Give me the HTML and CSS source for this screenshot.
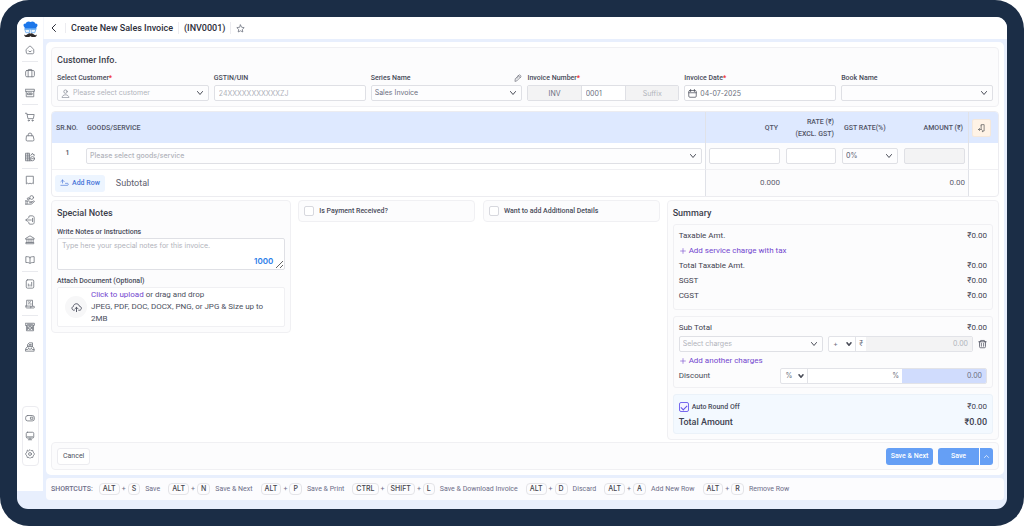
FILE: index.html
```html
<!DOCTYPE html>
<html lang="en">
<head>
<meta charset="utf-8">
<meta name="viewport" content="width=device-width, initial-scale=1">
<title>Create New Sales Invoice</title>
<link rel="stylesheet" href="styles.css">
</head>
<body>
<svg class="sprite" aria-hidden="true">
  <symbol id="chev" viewBox="0 0 10 10"><path d="M2.500 3.500l2.500 3 2.500-3"/></symbol>
  <symbol id="home" viewBox="0 0 24 24"><path d="M3 10.500L10 3.600a3 3 0 0 1 4 0l7 6.900V18a3 3 0 0 1-3 3H6a3 3 0 0 1-3-3zM8 14c1.500 3 6.500 3 8 0"/></symbol>
  <symbol id="case" viewBox="0 0 24 24"><rect x="1.500" y="6" width="21" height="15" rx="3"/><path d="M8 6V3.500h8V6M7.500 6v15M16.500 6v15"/></symbol>
  <symbol id="archive" viewBox="0 0 24 24"><path d="M1.500 3h21v5h-21zM3 8v13h18V8M7 12h10v4H7zM10 14h4"/></symbol>
  <symbol id="cart" viewBox="0 0 24 24"><path d="M1 3h3.500L7 16h13l2-10H5.500"/><circle cx="9" cy="20.500" r="1.400"/><circle cx="18" cy="20.500" r="1.400"/></symbol>
  <symbol id="bag" viewBox="0 0 24 24"><path d="M4.500 9h15l2 9a3 3 0 0 1-3 3.500h-13a3 3 0 0 1-3-3.500zM7.500 9V7a4.500 4.500 0 0 1 9 0v2"/></symbol>
  <symbol id="stock" viewBox="0 0 24 24"><path d="M2 3h9v18H2zM2 7.500h9M2 12h9M2 16.500h9M6.500 3v18M11 21h4M14 8l4-5 1 3h3v3"/><circle cx="18" cy="16" r="5"/><path d="M16 16h4"/></symbol>
  <symbol id="note" viewBox="0 0 24 24"><path d="M4 3h16v18l-2.500-1.500L15 21l-3-1.500L9 21l-2.500-1.500L4 21z"/></symbol>
  <symbol id="hand" viewBox="0 0 24 24"><circle cx="16" cy="6" r="4.500"/><circle cx="8" cy="9" r="2.500"/><path d="M1 14h4v8H1zM5 15c4-2 5 0 8 1h3c1 0 1 2.500-1 2.500h-4M16 17l5-3c2 0 2 2 0 3.500L15 22H5"/></symbol>
  <symbol id="exit" viewBox="0 0 24 24"><path d="M9 7V5c0-2 1-3 3-3h5c3 0 5 2 5 4v12c0 3-2 4-5 4h-5c-2 0-3-1-3-3v-2M15 12H2M5.500 8.500L2 12l3.500 3.500M18 8v8"/></symbol>
  <symbol id="bank" viewBox="0 0 24 24"><path d="M2 8l10-6 10 6v2H2zM4.500 10v8M9.500 10v8M14.500 10v8M19.500 10v8M3 18h18v3H3z"/></symbol>
  <symbol id="book" viewBox="0 0 24 24"><path d="M12 6c-2-2-5-2-10-2v14c5 0 8 0 10 2.500C14 18 17 18 22 18V4c-5 0-8 0-10 2zM12 6v14"/></symbol>
  <symbol id="chart" viewBox="0 0 24 24"><rect x="3" y="2" width="18" height="20" rx="3"/><path d="M8 17v-5M12 17v-3M16 17V8"/></symbol>
  <symbol id="bill" viewBox="0 0 24 24"><path d="M4 17V3h14v13M2 17h12v4.500H4c-2 0-2-2-2-4.500zM14 21.500h7c2 0 2-2 1-4h-8M8 12l6-6M8 7h2M12 12h3"/></symbol>
  <symbol id="safe" viewBox="0 0 24 24"><path d="M1.500 3h21v5h-21zM3.500 8v13h17V8M6 5.500h12"/><circle cx="12" cy="14" r="4"/><path d="M12 12v4M6 11v7M18 11v7"/></symbol>
  <symbol id="print" viewBox="0 0 24 24"><path d="M6 11V6l4-4h8v9M3 14l3-3h12l3 3 1 8H2zM10 6h5M9 9h6M8 14l1 3h6l1-3M2 18h4M18 18h4"/></symbol>
  <symbol id="toggle" viewBox="0 0 24 24"><rect x="1.500" y="6" width="21" height="13" rx="5"/><path d="M14 10h5v5h-5z"/></symbol>
  <symbol id="screen" viewBox="0 0 24 24"><rect x="3" y="3" width="18" height="14" rx="3"/><path d="M5 14h14M12 17v3M8 21h8"/></symbol>
  <symbol id="gear" viewBox="0 0 24 24"><path d="M9.500 4L12 1.500 14.500 4l4-.5 1 4L22 10v4l-2.500 2.500-1 4-4-.5L12 22.500 9.500 20l-4 .5-1-4L2 14v-4l2.500-2.500 1-4z"/><circle cx="12" cy="12" r="3.500"/></symbol>
</svg>

<div class="frame">
 <div class="screen">
  <nav class="side" aria-label="Main">
    <svg class="logo" viewBox="0 0 28 32" aria-label="Logo">
      <path fill="#1b76ea" d="M3 12C-1 9 1 4 5 5 6 1 11 0 14 2c3-2 8-1 9 3 4-1 6 4 2 7v3H3z"/>
      <path fill="#8ec3f8" d="M3 14h22v3H3z"/>
      <path fill="#e9f4ff" stroke="#64a9ef" stroke-width="1.500" d="M4 16h8v6H6zM16 16h8l-2 6h-6z"/>
      <path fill="#2e2a2a" d="M14 24c2-2 5 0 7 2 2 1 4 1 5-1 0 5-4 6-8 5-2 0-3-1-4-2-1 1-2 2-4 2-4 1-8 0-8-5 1 2 3 2 5 1 2-2 5-4 7-2z"/>
    </svg>
    <a class="nav" href="#" aria-label="Home"><svg><use href="#home"/></svg></a>
    <hr>
    <a class="nav" href="#" aria-label="Business"><svg><use href="#case"/></svg></a>
    <a class="nav" href="#" aria-label="Products"><svg><use href="#archive"/></svg></a>
    <hr>
    <a class="nav" href="#" aria-label="Sales"><svg><use href="#cart"/></svg></a>
    <a class="nav" href="#" aria-label="Purchase"><svg><use href="#bag"/></svg></a>
    <a class="nav" href="#" aria-label="Stock"><svg><use href="#stock"/></svg></a>
    <hr>
    <a class="nav" href="#" aria-label="Notes"><svg><use href="#note"/></svg></a>
    <a class="nav" href="#" aria-label="Payments"><svg><use href="#hand"/></svg></a>
    <a class="nav" href="#" aria-label="Expenses"><svg><use href="#exit"/></svg></a>
    <a class="nav" href="#" aria-label="Bank"><svg><use href="#bank"/></svg></a>
    <a class="nav" href="#" aria-label="Ledger"><svg><use href="#book"/></svg></a>
    <hr>
    <a class="nav" href="#" aria-label="Reports"><svg><use href="#chart"/></svg></a>
    <a class="nav" href="#" aria-label="Bills"><svg><use href="#bill"/></svg></a>
    <hr>
    <a class="nav" href="#" aria-label="Cash"><svg><use href="#safe"/></svg></a>
    <a class="nav" href="#" aria-label="Print"><svg><use href="#print"/></svg></a>
    <div class="side-tools">
      <a href="#" aria-label="Wallet"><svg><use href="#toggle"/></svg></a>
      <a href="#" aria-label="Display"><svg><use href="#screen"/></svg></a>
      <a href="#" aria-label="Settings"><svg><use href="#gear"/></svg></a>
    </div>
  </nav>

  <div class="main">
    <header class="top">
      <button class="bare" aria-label="Back"><svg class="i-back" viewBox="0 0 10 10"><path d="M6.500 1.500L3 5l3.500 3.500"/></svg></button>
      <h1>Create New Sales Invoice</h1>
      <span class="number">(INV0001)</span>
      <button class="bare" aria-label="Favourite"><svg class="i-star" viewBox="0 0 24 24"><path d="M12 2.500l3 6.200 6.800 1-4.900 4.800 1.200 6.800-6.100-3.200-6.100 3.200 1.200-6.800-4.900-4.800 6.800-1z"/></svg></button>
    </header>

    <form class="sheet">
      <section class="card customer">
        <h2>Customer Info.</h2>
        <div class="fields">
          <div class="field">
            <label for="cust">Select Customer<b>*</b></label>
            <div class="select icon-left"><svg class="lead" viewBox="0 0 24 24"><circle cx="12" cy="7" r="4.500"/><path d="M3 22c0-9 18-9 18 0z"/></svg><select id="cust" class="empty"><option>Please select customer</option></select><svg class="chev"><use href="#chev"/></svg></div>
          </div>
          <div class="field">
            <label for="gst">GSTIN/UIN</label>
            <input id="gst" class="box" placeholder="24XXXXXXXXXXXZJ">
          </div>
          <div class="field">
            <div class="label-row"><label for="series">Series Name</label><button type="button" class="bare" aria-label="Edit series"><svg class="i-pen" viewBox="0 0 24 24"><path d="M3 21l1-7L15 3c2-2 8 3 5 6L9 20zM13 5l6 6M8 14l5-5"/></svg></button></div>
            <div class="select"><select id="series"><option>Sales Invoice</option></select><svg class="chev"><use href="#chev"/></svg></div>
          </div>
          <div class="field">
            <label for="invno">Invoice Number<b>*</b></label>
            <div class="joined"><input class="muted" value="INV" aria-label="Prefix"><input id="invno" value="0001"><input class="muted" placeholder="Suffix" aria-label="Suffix"></div>
          </div>
          <div class="field">
            <label for="date">Invoice Date<b>*</b></label>
            <div class="select icon-left"><svg class="lead dark" viewBox="0 0 24 24"><rect x="2" y="4" width="20" height="18" rx="3"/><path d="M2 10h20M7 1v6M17 1v6"/></svg><input id="date" class="box" value="04-07-2025"></div>
          </div>
          <div class="field">
            <label for="bookname">Book Name</label>
            <div class="select"><select id="bookname"><option></option></select><svg class="chev"><use href="#chev"/></svg></div>
          </div>
        </div>
      </section>

      <div class="table-card">
        <table>
          <colgroup><col class="c-sr"><col><col class="c-qty"><col class="c-rate"><col class="c-gst"><col class="c-amt"><col class="c-act"></colgroup>
          <thead>
            <tr>
              <th class="sr">SR.NO.</th><th class="goods">GOODS/SERVICE</th><th class="num edge">QTY</th><th class="num">RATE (₹)<br>(EXCL. GST)</th><th class="gst">GST RATE(%)</th><th class="num">AMOUNT (₹)</th>
              <th class="edge act"><button type="button" class="cols" aria-label="Columns"><svg viewBox="0 0 24 24"><path d="M11 6V3h8v17h-5M11 6v8M4 16h8M7 13l-3 3 3 3M15 20v2"/></svg></button></th>
            </tr>
          </thead>
          <tbody>
            <tr class="item">
              <td class="idx">1</td>
              <td><div class="select"><select class="empty" aria-label="Goods or service"><option>Please select goods/service</option></select><svg class="chev"><use href="#chev"/></svg></div></td>
              <td class="edge tint"><input class="box" aria-label="Quantity"></td>
              <td class="tint"><input class="box" aria-label="Rate"></td>
              <td class="tint"><div class="select"><select aria-label="GST rate"><option>0%</option></select><svg class="chev"><use href="#chev"/></svg></div></td>
              <td class="tint"><input class="box muted" aria-label="Amount" readonly></td>
              <td class="edge"></td>
            </tr>
          </tbody>
          <tfoot>
            <tr>
              <td colspan="2"><div class="foot-left"><button type="button" class="add-row"><svg viewBox="0 0 26 24"><path d="M7 3v9M2 8l5-5 5 5M2 19h20c3 0 3-6 0-6h-6"/></svg>Add Row</button><span>Subtotal</span></div></td>
              <td class="edge tint num">0.000</td><td class="tint"></td><td class="tint"></td><td class="tint num total">0.00</td><td class="edge"></td>
            </tr>
          </tfoot>
        </table>
      </div>

      <div class="lower">
        <section class="card notes">
          <h2>Special Notes</h2>
          <label for="notes">Write Notes or Instructions</label>
          <div class="area"><textarea id="notes" placeholder="Type here your special notes for this invoice."></textarea><span>1000</span></div>
          <h3>Attach Document (Optional)</h3>
          <div class="upload">
            <span class="up-icon"><svg viewBox="0 0 24 24"><path d="M7 18H6C1 17 1 11 5 10c1-8 12-8 13-1 6 1 6 8 1 9h-2M12 21v-9M8.500 15l3.500-3.500 3.500 3.500"/></svg></span>
            <p><a href="#">Click to upload</a> or drag and drop<br>JPEG, PDF, DOC, DOCX, PNG, or JPG &amp; Size up to 2MB</p>
          </div>
        </section>
        <div class="options">
          <label class="card opt"><input type="checkbox" class="tick">Is Payment Received?</label>
          <label class="card opt"><input type="checkbox" class="tick">Want to add Additional Details</label>
        </div>
        <section class="card summary">
          <h2>Summary</h2>
          <div class="panel">
            <div class="row"><span>Taxable Amt.</span><span>₹0.00</span></div>
            <button type="button" class="add"><svg viewBox="0 0 10 10"><path d="M5 1v8M1 5h8"/></svg>Add service charge with tax</button>
            <div class="row"><span>Total Taxable Amt.</span><span>₹0.00</span></div>
            <div class="row"><span>SGST</span><span>₹0.00</span></div>
            <div class="row"><span>CGST</span><span>₹0.00</span></div>
          </div>
          <div class="panel">
            <div class="row"><span>Sub Total</span><span>₹0.00</span></div>
            <div class="charge">
              <div class="select"><select class="empty" aria-label="Charges"><option>Select charges</option></select><svg class="chev"><use href="#chev"/></svg></div>
              <div class="group">
                <div class="select mini"><select aria-label="Sign"><option>+</option></select><svg class="chev"><use href="#chev"/></svg></div>
                <span class="rupee">₹</span><input class="muted" placeholder="0.00" aria-label="Charge amount">
              </div>
              <button type="button" class="bare" aria-label="Delete charge"><svg class="i-bin" viewBox="0 0 24 24"><path d="M2 6h20M7 6V2.500h10V6M4 6v13c0 2 1 3 3 3h10c2 0 3-1 3-3V6M9 10v8M15 10v8"/></svg></button>
            </div>
            <button type="button" class="add"><svg viewBox="0 0 10 10"><path d="M5 1v8M1 5h8"/></svg>Add another charges</button>
            <div class="row discount">
              <label for="disc">Discount</label>
              <div class="group">
                <div class="select mini"><select aria-label="Discount type"><option>%</option></select><svg class="chev"><use href="#chev"/></svg></div>
                <input id="disc"><span class="pct">%</span><output>0.00</output>
              </div>
            </div>
          </div>
          <div class="panel blue">
            <div class="row"><label class="auto"><input type="checkbox" class="tick" checked>Auto Round Off</label><span>₹0.00</span></div>
            <div class="row grand"><span>Total Amount</span><span>₹0.00</span></div>
          </div>
        </section>
      </div>

      <footer class="card actions">
        <button type="button" class="cancel">Cancel</button>
        <button type="button" class="primary next">Save &amp; Next</button>
        <div class="split"><button type="button" class="primary save">Save</button><button type="button" class="primary more" aria-label="More save options"><svg viewBox="0 0 10 10"><path d="M2 6.500l3-3 3 3"/></svg></button></div>
      </footer>
    </form>

    <div class="shortcuts">
      <span class="cap">SHORTCUTS:</span>
      <span class="sc"><kbd>ALT</kbd>+<kbd>S</kbd><em>Save</em></span>
      <span class="sc"><kbd>ALT</kbd>+<kbd>N</kbd><em>Save &amp; Next</em></span>
      <span class="sc"><kbd>ALT</kbd>+<kbd>P</kbd><em>Save &amp; Print</em></span>
      <span class="sc"><kbd>CTRL</kbd>+<kbd>SHIFT</kbd>+<kbd>L</kbd><em>Save &amp; Download Invoice</em></span>
      <span class="sc"><kbd>ALT</kbd>+<kbd>D</kbd><em>Discard</em></span>
      <span class="sc"><kbd>ALT</kbd>+<kbd>A</kbd><em>Add New Row</em></span>
      <span class="sc"><kbd>ALT</kbd>+<kbd>R</kbd><em>Remove Row</em></span>
    </div>
  </div>
 </div>
</div>
</body>
</html>
```
FILE: styles.css
```css
* { box-sizing: border-box; }
body { margin: 0; background: #fff; font: 7px/10px Roboto, "Noto Sans", sans-serif; color: #4c4f5e; }
h1, h2, h3, p { margin: 0; font-weight: 500; }
input, select, textarea, button { font: inherit; color: inherit; margin: 0; min-width: 0; border-radius: 0; }
input, select, textarea { font-family: Inter, "Noto Sans", sans-serif; }
svg { fill: none; stroke: currentColor; stroke-linecap: round; stroke-linejoin: round; display: block; }
button { padding: 0; cursor: pointer; }
a { text-decoration: none; }
.sprite { position: absolute; width: 0; height: 0; }
.bare { border: 0; background: none; }

.frame { min-height: 100vh; padding: 17px; background: #1b2d46; border-radius: 29px; display: flex; }
.screen { flex: 1; min-width: 0; display: flex; background: #e8effd; border-radius: 11px; overflow: hidden; }

.side { width: 26px; margin-bottom: 18px; padding: 4px 0 25px; background: #fff; display: flex; flex-direction: column; align-items: center; }
.logo { width: 15px; height: 17px; stroke: none; margin-bottom: 2px; flex: none; }
.side hr { width: 16px; height: 1px; margin: 1px 0; border: 0; background: #e9eaee; flex: none; }
.side hr:nth-of-type(even) { margin-bottom: 2px; }
.nav { height: 20px; display: flex; align-items: center; color: #747881; }
.nav svg, .side-tools svg { width: 10px; height: 10px; stroke-width: 2; }
.side-tools { margin-top: auto; width: 17px; padding: 2px 0; border: 1px solid #ececf0; border-radius: 4px; display: grid; justify-items: center; }
.side-tools a { height: 18px; display: flex; align-items: center; color: #747881; }

.main { flex: 1; min-width: 0; display: flex; flex-direction: column; gap: 3px; padding-bottom: 9px; }
.top { height: 22px; background: #fff; border-left: 1px solid #f4f6fb; display: flex; align-items: center; padding-left: 5px; color: #2c2e3a; }
.top > * { padding: 0 5px; border-right: 1px solid #ececf0; line-height: 12px; }
.top > :last-child { border: 0; }
.top > .bare:first-child { padding: 0 6px 0 0; }
.top h1, .number { font-size: 9px; font-weight: 500; }
.i-back { width: 10px; height: 10px; stroke-width: 1; }
.i-star { width: 9px; height: 9px; stroke-width: 2; color: #666b78; }

.sheet { flex: 1; margin: 0 3px; padding: 5px; background: #fff; border-radius: 5px; display: flex; flex-direction: column; }
.card { background: #fcfcfd; border: 1px solid #f0f0f3; border-radius: 4px; }
h2 { font-size: 9px; line-height: 14px; font-weight: 500; color: #3c3f4c; }
label, h3 { font-size: 7px; line-height: 10px; font-weight: 500; color: #484b59; }
label b { color: #f03030; }

.customer { padding: 5px; }
.fields { display: grid; grid-template-columns: repeat(6, minmax(0, 1fr)); gap: 5px; margin-top: 6px; }
.field { display: grid; gap: 2px; }
.label-row { display: flex; justify-content: space-between; align-items: center; }
.i-pen { width: 8px; height: 8px; stroke-width: 2; color: #60646f; }

.box, .select select { width: 100%; height: 16px; padding: 0 4px; border: 1px solid #dfe0e5; border-radius: 2px; background: #fff; color: #6c6f7e; outline: 0; display: block; }
.box::placeholder, .muted::placeholder, textarea::placeholder { color: #b1b3bb; opacity: 1; }
.select { position: relative; min-width: 0; }
.select select { appearance: none; padding: 0 3px; background: #fdfdfe; }
.select .empty { color: #b1b3bb; }
.chev { position: absolute; right: 4px; top: 3px; width: 10px; height: 10px; stroke-width: 1; color: #4a4d58; pointer-events: none; }
.lead { position: absolute; left: 4px; top: 4px; width: 9px; height: 9px; stroke-width: 2; color: #878b95; pointer-events: none; }
.lead.dark { color: #4b4f5b; }
.icon-left select, .icon-left .box { padding-left: 15px; }
.muted, .box.muted { background: #f3f3f4; }
.joined { display: grid; grid-template-columns: 54fr 45fr 53fr; border: 1px solid #dfe0e5; border-radius: 2px; overflow: hidden; }
.joined input { height: 14px; padding: 0 4px; border: 0; border-right: 1px solid #dfe0e5; color: #6c6f7e; }
.joined .muted { text-align: center; }
.joined input:last-child { border-right: 0; }

.table-card { margin-top: 4px; border: 1px solid #ececf0; border-radius: 4px; overflow: hidden; }
table { width: 100%; table-layout: fixed; border-collapse: separate; border-spacing: 0; }
.c-sr { width: 31px; } .c-qty { width: 78px; } .c-rate { width: 56px; } .c-gst { width: 62px; } .c-amt { width: 67px; } .c-act { width: 30px; }
th, td { padding: 0 3px; text-align: left; font-weight: 500; }
th { height: 31px; background: #dee9ff; color: #505365; line-height: 12px; }
th.sr, th.goods { white-space: nowrap; padding-left: 4px; }
th.gst { padding-left: 5px; }
.num { text-align: right; }
th.num { padding-right: 5px; }
.edge { border-left: 1px solid #e0e2e8; }
.tint { background: #fcfcfd; }
tbody td { height: 27px; border-bottom: 1px solid #f0f0f3; }
.item .idx { text-align: center; vertical-align: top; padding-top: 5px; }
tfoot td { height: 26px; font-size: 8px; font-weight: 400; color: #5d606e; }
.foot-left { display: flex; align-items: center; gap: 11px; font-size: 9px; }
.add-row { display: flex; align-items: center; gap: 3px; height: 17px; padding: 0 5px; border: 0; border-radius: 3px; background: #edf5ff; color: #4774d8; font-size: 7px; font-weight: 500; }
.add-row svg { width: 9px; height: 8px; stroke-width: 2; }
.cols { width: 19px; height: 18px; border: 1px solid #f4e8dc; border-radius: 2px; background: #fff3e6; display: grid; place-items: center; color: #666; }
.cols svg { width: 9px; height: 10px; stroke-width: 2; }

.lower { display: grid; grid-template-columns: 240fr 361fr 332fr; gap: 7px; align-items: start; margin-top: 3px; }
.lower .card { padding: 5px; }
.notes { display: grid; }
.notes label { margin-top: 7px; }
.area { position: relative; margin-top: 1px; }
.area textarea { display: block; width: 100%; height: 32px; padding: 2px 4px; border: 1px solid #dfe0e5; border-radius: 2px; background: #fff; resize: vertical; }
.area span { position: absolute; right: 12px; bottom: 4px; font-family: Inter, sans-serif; font-size: 8px; font-weight: 600; color: #2b7de9; }
.notes h3 { margin: 6px 0 1px; }
.upload { display: flex; align-items: center; gap: 4px; padding: 1px 7px; background: #fff; border: 1px solid #f0f0f3; border-radius: 2px; }
.up-icon { flex: none; width: 22px; height: 22px; border-radius: 50%; background: #f7f7f8; display: grid; place-items: center; }
.up-icon svg { width: 11px; height: 11px; stroke-width: 2; }
.upload p { font-size: 8px; line-height: 12px; font-weight: 400; }
.upload a, .add { color: #7346cf; }
.options { display: grid; grid-template-columns: 1fr 1fr; gap: 8px; }
.opt { display: flex; align-items: center; gap: 5px; height: 22px; }
.tick { appearance: none; width: 10px; height: 10px; border: 1px solid #d7d8de; border-radius: 2px; background: #fff; flex: none; }
.tick:checked { border-color: #7769ef; background: #f5f3ff; display: grid; place-items: center; }
.tick:checked::after { content: ""; width: 5px; height: 3px; border: solid #6252e6; border-width: 0 0 1px 1px; transform: rotate(-45deg); }

.panel { padding: 3px 5px; border: 1px solid #f0f0f3; border-radius: 3px; font-size: 8px; }
.panel + .panel { margin-top: 6px; }
h2 + .panel { margin-top: 4px; padding-bottom: 6px; }
.row { display: flex; align-items: center; justify-content: space-between; height: 15px; color: #3f4250; }
.row label { font-size: 8px; font-weight: 400; }
.add { display: flex; align-items: center; gap: 3px; height: 15px; padding: 0 1px; border: 0; background: none; }
.add svg { width: 6px; height: 6px; stroke-width: 1; }
.charge { display: grid; grid-template-columns: 1fr 1fr 9px; gap: 5px; align-items: center; margin: 1px 0; font-size: 7px; }
.i-bin { width: 9px; height: 10px; stroke-width: 2; }
.group { display: flex; align-items: stretch; height: 16px; border: 1px solid #e2e3e8; border-radius: 2px; background: #fff; overflow: hidden; color: #6c6f7e; font-family: Inter, sans-serif; font-size: 7px; }
.group input { flex: 1; border: 0; text-align: right; padding: 0 4px; outline: 0; background: transparent; }
.group .muted { background: #f3f3f4; }
.select.mini { flex: none; width: 27px; border-right: 1px solid #e2e3e8; }
.mini select { height: 14px; border: 0; padding-left: 4px; background: transparent; }
.mini .chev { right: 2px; top: 3px; width: 8px; height: 8px; stroke-width: 2; }
.rupee, .pct { padding: 0 3px; line-height: 14px; }
.discount { height: 16px; }
.discount .group { width: 67%; }
output { width: 84px; background: #d0dcfd; text-align: right; padding-right: 4px; line-height: 14px; }
.panel.blue { background: #f3f9ff; border-color: #ebf2f9; padding: 4px 5px; }
.row .auto { display: flex; align-items: center; gap: 3px; font-size: 7px; font-weight: 500; }
.row.grand { font-size: 9px; font-weight: 500; }

.actions { margin-top: auto; padding: 5px; height: 28px; display: flex; align-items: center; gap: 5px; }
.actions button { height: 17px; border-radius: 3px; font-weight: 500; }
.actions .cancel { padding: 0 5px; margin-right: auto; border: 1px solid #ececf0; background: #fff; font-weight: 400; }
.actions .primary { border: 0; background: #659ff5; color: #fff; }
.actions .next { width: 47px; }
.split { display: flex; gap: 1px; }
.actions .save { width: 41px; border-radius: 3px 0 0 3px; }
.actions .more { width: 13px; border-radius: 0 3px 3px 0; display: grid; place-items: center; }
.more svg { width: 7px; height: 7px; stroke-width: 1; }

.shortcuts { min-height: 22px; margin: 0 3px; padding: 0 5px; background: #fcfcfe; border-radius: 4px; display: flex; flex-wrap: wrap; align-items: center; gap: 0 8px; color: #6c6d88; }
.cap { margin-right: -2px; font-weight: 500; }
.sc { display: flex; align-items: center; gap: 2px; }
kbd { height: 12px; padding: 0 3px; border: 1px solid #e4e4e8; border-radius: 4px; font: 500 7px/10px Inter, sans-serif; color: #45454d; }
em { font-style: normal; margin-left: 3px; }
```
